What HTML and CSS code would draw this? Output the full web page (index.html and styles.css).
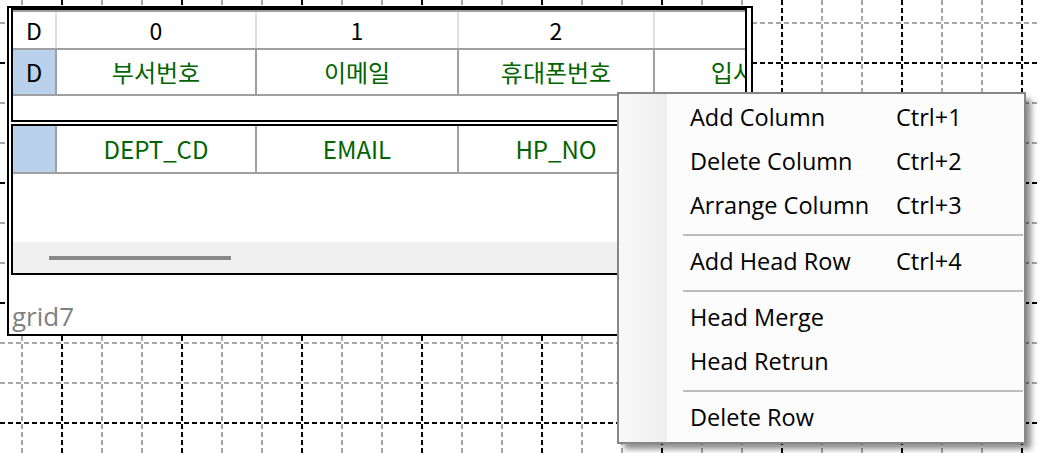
FILE: index.html
```html
<!DOCTYPE html>
<html lang="ko">
<head>
<meta charset="utf-8">
<title>grid7</title>
<link rel="stylesheet" href="styles.css">
</head>
<body>
<svg class="canvas" width="1039" height="453" viewBox="0 0 1039 453" aria-hidden="true">
  <path class="gl gray" d="M0 23H1039M0 103H1039M0 143H1039M0 223H1039M0 263H1039M0 343H1039M0 383H1039"/>
  <path class="gl gray" d="M22 0V453M102 0V453M142 0V453M222 0V453M262 0V453M342 0V453M382 0V453M462 0V453M502 0V453M582 0V453M622 0V453M702 0V453M742 0V453M822 0V453M862 0V453M942 0V453M982 0V453"/>
  <path class="gl black" d="M0 63H1039M0 183H1039M0 303H1039M0 423H1039"/>
  <path class="gl black" d="M62 0V453M182 0V453M302 0V453M422 0V453M542 0V453M662 0V453M782 0V453M902 0V453M1022 0V453"/>
</svg>

<div class="frame">
  <div class="grid head">
    <div class="topline"></div>
    <div class="row r1">
      <div class="cell c-d">D</div>
      <div class="cell c0">0</div>
      <div class="cell c1">1</div>
      <div class="cell c2">2</div>
      <div class="cell c3"></div>
    </div>
    <div class="row r2">
      <div class="cell c-d sel">D</div>
      <div class="cell c0">부서번호</div>
      <div class="cell c1">이메일</div>
      <div class="cell c2">휴대폰번호</div>
      <div class="cell c3">입사일자</div>
    </div>
  </div>
  <div class="grid body">
    <div class="row r3">
      <div class="cell c-d sel"></div>
      <div class="cell c0">DEPT_CD</div>
      <div class="cell c1">EMAIL</div>
      <div class="cell c2">HP_NO</div>
      <div class="cell c3"></div>
    </div>
    <div class="spacer"></div>
    <div class="hscroll"><div class="thumb"></div></div>
  </div>
  <div class="label">grid7</div>
</div>

<div class="menu">
  <div class="item"><span class="item-label">Add Column</span><span class="key">Ctrl+1</span></div>
  <div class="item"><span class="item-label">Delete Column</span><span class="key">Ctrl+2</span></div>
  <div class="item"><span class="item-label">Arrange Column</span><span class="key">Ctrl+3</span></div>
  <div class="sep"></div>
  <div class="item"><span class="item-label">Add Head Row</span><span class="key">Ctrl+4</span></div>
  <div class="sep"></div>
  <div class="item"><span class="item-label">Head Merge</span></div>
  <div class="item"><span class="item-label">Head Retrun</span></div>
  <div class="sep"></div>
  <div class="item"><span class="item-label">Delete Row</span></div>
</div>
</body>
</html>
```

FILE: styles.css
```css
* { box-sizing: border-box; }

html, body { margin: 0; }

body {
  width: 1039px;
  height: 453px;
  padding: 6px 0 0 7px;
  position: relative;
  overflow: hidden;
  background: #ffffff;
  font-family: "Noto Sans CJK KR", "Noto Sans", sans-serif;
}

.canvas {
  position: absolute;
  left: 0;
  top: 0;
  z-index: 0;
  shape-rendering: crispEdges;
}

.gl {
  fill: none;
  stroke-width: 2;
  stroke-dasharray: 5 3;
}
.gl.gray { stroke: #a6a6a6; }
.gl.black { stroke: #000000; }

.frame {
  position: relative;
  z-index: 1;
  width: 746px;
  height: 330px;
  border: 2px solid #000;
  background: #fff;
  padding: 0 4px 0 2px;
  display: flex;
  flex-direction: column;
  overflow: hidden;
}

.grid {
  border: 2px solid #000;
  display: flex;
  flex-direction: column;
  overflow: hidden;
  flex: none;
  background: #fff;
}

.head { height: 114px; }

.body {
  margin-top: 2px;
  height: 151px;
}

.topline {
  height: 2px;
  background: #a0a0a0;
  flex: none;
}

.row {
  display: flex;
  flex: none;
}

.r1 {
  height: 38px;
  border-bottom: 2px solid #a0a0a0;
}

.r2 {
  height: 46px;
  border-bottom: 2px solid #a0a0a0;
}

.r3 {
  height: 48px;
  border-bottom: 2px solid #a0a0a0;
}

.cell {
  flex: none;
  height: 100%;
  display: flex;
  align-items: center;
  justify-content: center;
  border-right: 2px solid #a0a0a0;
  white-space: nowrap;
  overflow: hidden;
  font-size: 24px;
  line-height: 1;
  color: #006400;
}

.r1 .cell {
  border-right-color: #e0e0e0;
  color: #000;
  font-size: 23px;
}

.c-d { width: 44px; }
.c0 { width: 200px; }
.c1 { width: 202px; }
.c2 { width: 196px; }
.c3 { width: 200px; border-right: none; }

.sel {
  background: #b9d1ea;
  color: #000;
}
.r2 .sel { color: #000; }

.spacer { flex: 1; }

.hscroll {
  height: 31px;
  flex: none;
  background: #f0f0f0;
  padding: 14px 0 0 36px;
}

.thumb {
  width: 182px;
  height: 4px;
  background: #888888;
}

.label {
  margin-top: 23px;
  padding-left: 1px;
  font-family: "Open Sans", sans-serif;
  font-size: 26px;
  line-height: 36px;
  color: #808080;
}

.menu {
  position: absolute;
  left: 617px;
  top: 92px;
  z-index: 2;
  width: 409px;
  height: 352px;
  border: 2px solid #868686;
  padding: 3px 0 1px 0;
  background:
    linear-gradient(to right, #f8f8f8, #eeeeee) left top / 48px 100% no-repeat,
    #fcfcfc;
  box-shadow: 6px 6px 6px -1px rgba(0, 0, 0, 0.45);
  font-family: "Open Sans", sans-serif;
  font-size: 23.5px;
  color: #000;
}

.item {
  height: 44px;
  display: flex;
  align-items: center;
  padding-left: 71px;
  padding-bottom: 4px;
  white-space: nowrap;
}

.item-label { width: 206px; }

.sep {
  height: 12px;
  margin: 0 1px 0 64px;
  padding-top: 5px;
}

.sep::before {
  content: "";
  display: block;
  height: 2px;
  background: #bdbdbd;
}
```
